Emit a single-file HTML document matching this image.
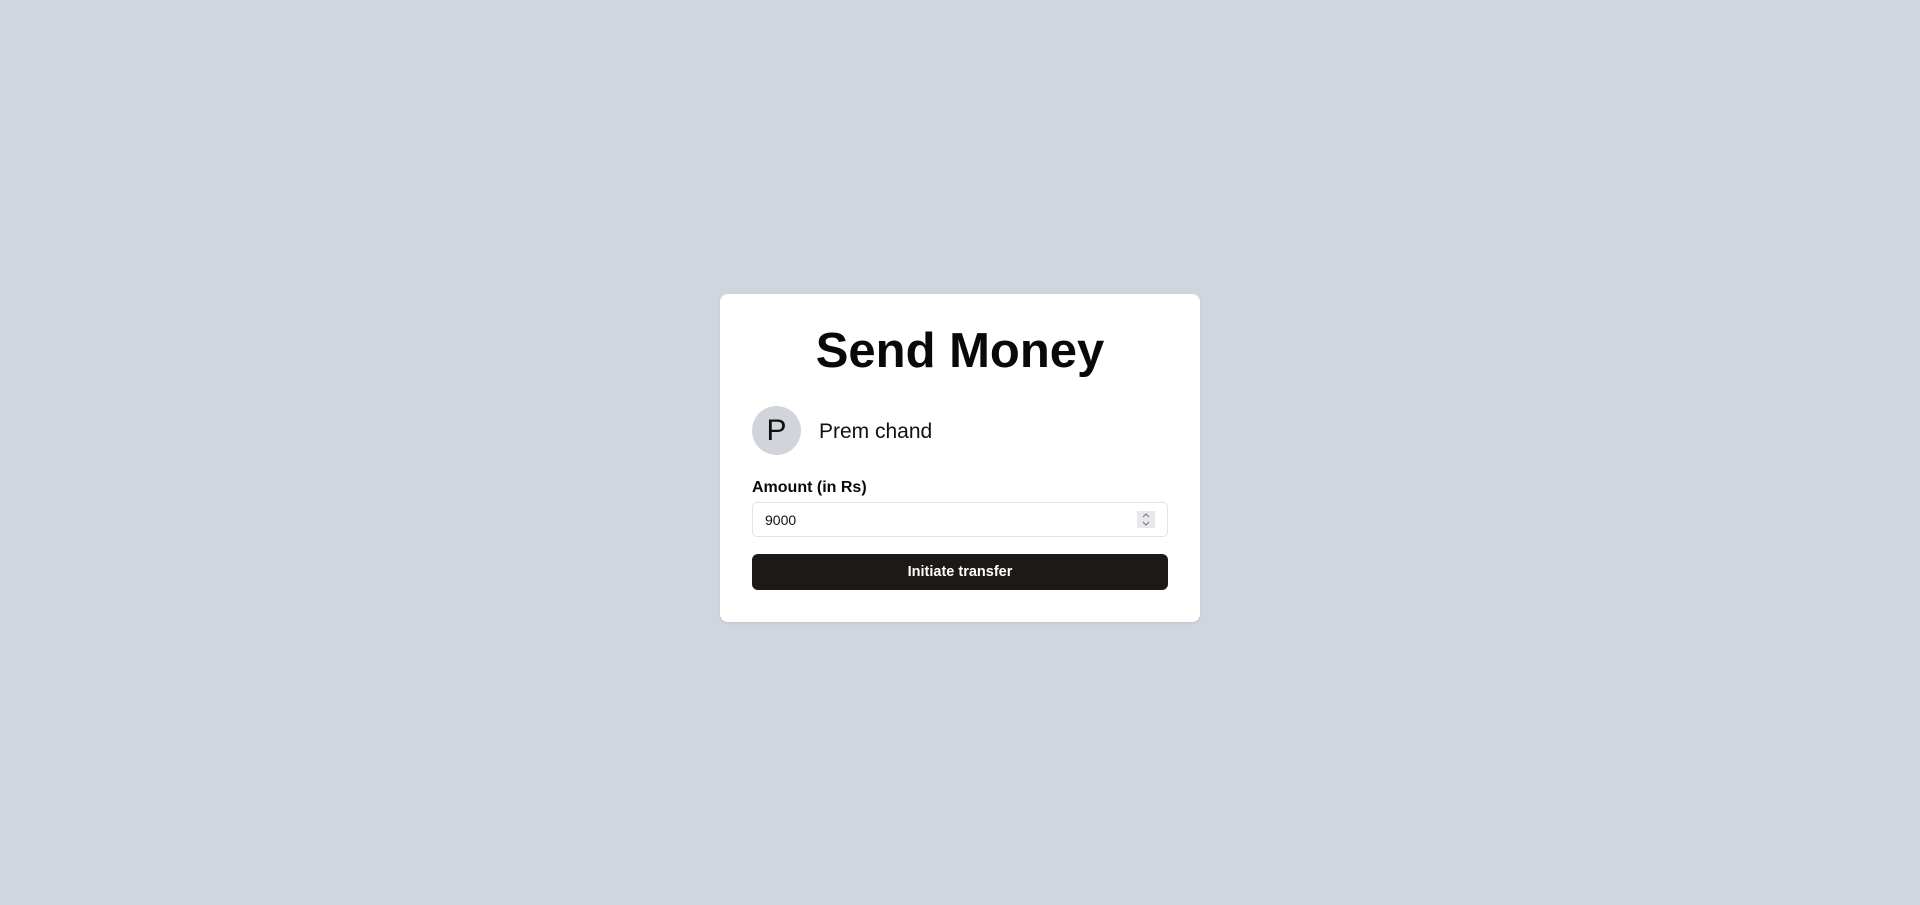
<!DOCTYPE html>
<html><head><style>
html,body{margin:0;padding:0;width:1920px;height:905px;background:#d1d5dd;font-family:"Liberation Sans",sans-serif;overflow:hidden}
.card{position:absolute;left:720px;top:294px;width:480px;height:328px;background:#fff;border-radius:8px;box-shadow:0 1px 3px rgba(0,0,0,.08)}
h1{position:absolute;left:0;right:0;top:27px;margin:0;text-align:center;font-size:49px;font-weight:bold;color:#0b0908;line-height:60px}
.av{position:absolute;left:32px;top:112px;width:49px;height:49px;border-radius:50%;background:#d1d5db;color:#111;font-size:30px;line-height:49px;text-align:center}
.name{position:absolute;left:99px;top:124px;font-size:21px;line-height:28px;color:#111}
.lbl{position:absolute;left:32px;top:185px;font-size:16px;font-weight:bold;color:#0b0908}
.inp{position:absolute;left:32px;top:208px;width:414px;height:33px;border:1px solid #e2e2e4;border-radius:5px}
.inp span{position:absolute;left:12px;top:9px;font-size:14px;color:#111}
.spin{position:absolute;right:12px;top:8px;width:18px;height:17px;background:#e8e8ec}
.btn{position:absolute;left:32px;top:260px;width:416px;height:36px;background:#1c1917;border-radius:6px;color:#fff;font-size:14.5px;font-weight:bold;text-align:center;line-height:37px}
</style></head><body>
<div class="card">
<h1>Send Money</h1>
<div class="av">P</div>
<div class="name">Prem chand</div>
<div class="lbl">Amount (in Rs)</div>
<div class="inp"><span>9000</span><div class="spin"><svg width="18" height="17" viewBox="0 0 18 17"><path d="M6 6l3-3 3 3M6 11l3 3 3-3" fill="none" stroke="#777" stroke-width="1"/></svg></div></div>
<div class="btn">Initiate transfer</div>
</div>
</body></html>
